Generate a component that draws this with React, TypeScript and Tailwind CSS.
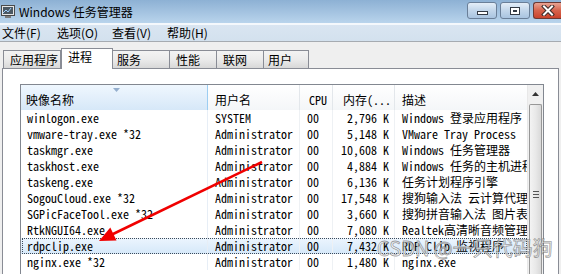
import React from 'react';

const ui = "font-['Noto_Sans_CJK_SC',sans-serif]";
const mono = "font-['Noto_Sans_Mono_CJK_SC','Liberation_Mono',monospace]";

const rows = [
  { name: 'winlogon.exe', user: 'SYSTEM', cpu: '00', mem: '2,796 K', desc: 'Windows 登录应用程序' },
  { name: 'vmware-tray.exe *32', user: 'Administrator', cpu: '00', mem: '5,148 K', desc: 'VMware Tray Process' },
  { name: 'taskmgr.exe', user: 'Administrator', cpu: '00', mem: '10,608 K', desc: 'Windows 任务管理器' },
  { name: 'taskhost.exe', user: 'Administrator', cpu: '00', mem: '4,884 K', desc: 'Windows 任务的主机进程' },
  { name: 'taskeng.exe', user: 'Administrator', cpu: '00', mem: '6,136 K', desc: '任务计划程序引擎' },
  { name: 'SogouCloud.exe *32', user: 'Administrator', cpu: '00', mem: '17,548 K', desc: '搜狗输入法 云计算代理' },
  { name: 'SGPicFaceTool.exe *32', user: 'Administrator', cpu: '00', mem: '3,660 K', desc: '搜狗拼音输入法 图片表情' },
  { name: 'RtkNGUI64.exe', user: 'Administrator', cpu: '00', mem: '7,080 K', desc: 'Realtek高清晰音频管理器' },
  { name: 'rdpclip.exe', user: 'Administrator', cpu: '00', mem: '7,432 K', desc: 'RDP Clip 监视程序', selected: true },
  { name: 'nginx.exe *32', user: 'Administrator', cpu: '00', mem: '1,480 K', desc: 'nginx.exe' },
];

const tabs = [
  { label: '应用程序', w: 'w-[58px]', pl: 'pl-[6px]' },
  { label: '进程', w: 'w-[52px]', pl: 'pl-[6px]', active: true },
  { label: '服务', w: 'w-[58px]', pl: 'pl-[4px]' },
  { label: '性能', w: 'w-[48px]', pl: 'pl-[6px]' },
  { label: '联网', w: 'w-[48px]', pl: 'pl-[6px]' },
  { label: '用户', w: 'w-[46px]', pl: 'pl-[4px]' },
];

function TitleButton({ kind }: { kind: 'min' | 'max' | 'close' }) {
  if (kind === 'close') {
    return (
      <div className="w-[28px] h-[17px] rounded-l-[3px] border border-r-0 border-[#6d3a34] bg-gradient-to-b from-[#e8a393] via-[#d6634c] to-[#c9422b] flex items-center justify-center">
        <svg width="14" height="11" viewBox="0 0 14 11">
          <path d="M3 1.5 L11 9.5 M11 1.5 L3 9.5" stroke="#3a2a28" strokeWidth="4" strokeLinecap="square" />
          <path d="M3 1.5 L11 9.5 M11 1.5 L3 9.5" stroke="#ffffff" strokeWidth="2" strokeLinecap="square" />
        </svg>
      </div>
    );
  }
  return (
    <div className="w-[30px] h-[17px] rounded-[3px] border border-[#6a7f98] bg-gradient-to-b from-[#e4eef8] via-[#c2d6ea] to-[#a9c4e0] flex items-center justify-center">
      {kind === 'min' ? (
        <div className="w-[11px] h-[4px] mt-[5px] border border-[#333a44] bg-white" />
      ) : (
        <div className="w-[10px] h-[8px] border border-[#333a44] bg-white flex items-center justify-center">
          <div className="w-[4px] h-[2px] border border-[#333a44]" />
        </div>
      )}
    </div>
  );
}

export default function App() {
  return (
    <div className={`relative w-[561px] h-[274px] overflow-hidden bg-[#efefef] text-black ${ui}`}>
      {/* Title bar */}
      <div className="h-[23px] flex justify-between bg-gradient-to-b from-[#8db1d4] to-[#b9d4ec]">
        <div className="flex items-center">
          <svg width="16" height="14" viewBox="0 0 16 14" className="ml-[1px]">
            <rect x="0.5" y="0.5" width="13" height="10" fill="#e6e6e6" stroke="#4a4a4a" />
            <rect x="2" y="2" width="10" height="7" fill="#4b5863" />
            <rect x="4" y="11" width="6" height="2" fill="#7a7a7a" />
            <path d="M2 8 L5 5 L7 7 L10 3" stroke="#9fd0ff" fill="none" />
          </svg>
          <span className="ml-[2px] text-[12px] leading-[16px]">Windows 任务管理器</span>
        </div>
        <div className="flex gap-[3px] pt-[2px]">
          <TitleButton kind="min" />
          <TitleButton kind="max" />
          <TitleButton kind="close" />
        </div>
      </div>
      <div className="h-[2px] bg-[#f4f8fc]" />

      {/* Menu bar */}
      <div className="h-[17px] flex items-center bg-gradient-to-b from-[#d9e5f1] to-[#d3e1ee] border-b border-[#a6abb1] text-[12px] leading-[16px]">
        {['文件(F)', '选项(O)', '查看(V)', '帮助(H)'].map((m) => (
          <span key={m} className="w-[55px] pl-[2px]">{m}</span>
        ))}
      </div>

      {/* Tabs */}
      <div className="flex items-end pl-[3px] pt-[6px]">
        {tabs.map((t) =>
          t.active ? (
            <div
              key={t.label}
              className={`${t.w} h-[21px] -mb-px ${t.pl} bg-white border border-b-0 border-[#898c95] text-[12px] leading-[14px] pt-[1px] relative z-10`}
            >
              {t.label}
            </div>
          ) : (
            <div
              key={t.label}
              className={`${t.w} h-[18px] ${t.pl} bg-gradient-to-b from-[#f3f3f3] via-[#ebebeb] to-[#d8d8d8] border border-b-0 border-[#898c95] -ml-px first:ml-0 text-[12px] leading-[16px] pt-[1px]`}
            >
              {t.label}
            </div>
          )
        )}
      </div>

      {/* Panel */}
      <div className="ml-[2px] w-[557px] h-[220px] bg-white border border-[#898c95] pl-[17px] pt-[15px]">
        <div className="w-[524px] h-[200px] border border-[#828790] border-b-0 flex">
          <div className="w-[506px]">
            {/* Header */}
            <div className="h-[25px] flex text-[12px]">
              <div className="relative w-[187px] pl-[5px] pt-[6px] bg-gradient-to-b from-[#eff7fe] via-[#e3effb] to-[#d6e8f8] border-r border-[#9ccdf2]">
                <svg width="7" height="4" viewBox="0 0 7 4" className="absolute left-[92px] top-[3px]">
                  <path d="M0 0 H7 L3.5 4 Z" fill="#94aecd" />
                </svg>
                映像名称
              </div>
              <div className="w-[92px] pl-[7px] pt-[6px] bg-gradient-to-b from-white to-[#f4f6f8] border-r border-[#e3e7eb]">用户名</div>
              <div className={`w-[33px] pl-[9px] pt-[6px] bg-gradient-to-b from-white to-[#f4f6f8] border-r border-[#e3e7eb] ${mono}`}>CPU</div>
              <div className={`w-[62px] pl-[10px] pt-[6px] bg-gradient-to-b from-white to-[#f4f6f8] border-r border-[#e3e7eb] ${mono}`}>内存(...</div>
              <div className="w-[132px] pl-[7px] pt-[6px] bg-gradient-to-b from-white to-[#f4f6f8]">描述</div>
            </div>

            {/* Rows */}
            <div className={`text-[12px] leading-[16px] ${mono}`}>
              {rows.map((r) => (
                <div
                  key={r.name}
                  className={`relative flex h-[16px] whitespace-nowrap ${
                    r.selected ? 'bg-gradient-to-b from-[#ecf5fe] to-[#d5e8f9]' : ''
                  }`}
                >
                  {r.selected && (
                    <div className="absolute inset-0 left-[1px] border border-dotted border-[#3c4a5a] pointer-events-none" />
                  )}
                  <div className="w-[187px] pl-[6px] overflow-hidden border-r border-[#e7eef6]">{r.name}</div>
                  <div className="w-[92px] pl-[7px] overflow-hidden border-r border-[#eef1f4]">{r.user}</div>
                  <div className="w-[33px] pl-[7px] border-r border-[#eef1f4]">{r.cpu}</div>
                  <div className="w-[62px] pr-[5px] text-right border-r border-[#eef1f4]">{r.mem}</div>
                  <div className="w-[132px] pl-[7px] overflow-hidden">{r.desc}</div>
                </div>
              ))}
            </div>
          </div>

          {/* Scrollbar */}
          <div className="w-[16px] bg-[#f0f0f0] border-l border-[#e8e8e8] flex flex-col items-center">
            <div className="h-[17px] w-full flex items-center justify-center">
              <svg width="7" height="4" viewBox="0 0 7 4">
                <path d="M0 4 L3.5 0 L7 4 Z" fill="#333" />
              </svg>
            </div>
            <div className="mt-[2px] w-[13px] flex-1 rounded-t-[2px] border border-b-0 border-[#979797] bg-gradient-to-r from-[#f3f3f3] via-[#e9e9e9] to-[#d9d9d9] flex flex-col items-center pt-[86px] gap-[2px]">
              <div className="w-[6px] h-px bg-[#555]" />
              <div className="w-[6px] h-px bg-[#555]" />
              <div className="w-[6px] h-px bg-[#555]" />
            </div>
          </div>
        </div>
      </div>

      {/* Red annotation arrow */}
      <svg className="absolute inset-0 pointer-events-none" width="561" height="274" viewBox="0 0 561 274">
        <line x1="262" y1="162" x2="112" y2="234.5" stroke="#f00000" strokeWidth="2.5" />
        <polygon points="99,241 116.5,240.5 110.3,227.5" fill="#f00000" />
      </svg>

      {/* Watermark */}
      <div className="absolute left-[377px] top-[235px] text-[20px] leading-[26px] text-white/70 [-webkit-text-stroke:0.8px_rgba(95,95,95,0.6)] whitespace-nowrap pointer-events-none">
        CSDN @一只代码狗
      </div>
    </div>
  );
}
